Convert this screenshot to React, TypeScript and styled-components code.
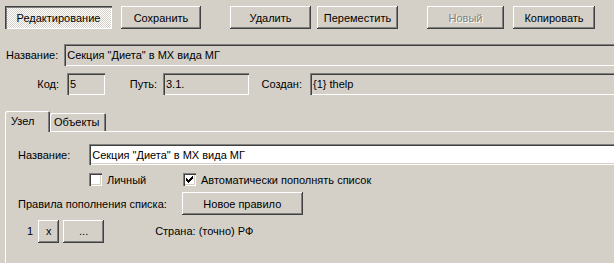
import React from 'react';
import styled, { createGlobalStyle, css } from 'styled-components';

const GlobalStyle = createGlobalStyle`
  html, body {
    margin: 0;
    padding: 0;
    background: #d4d0c8;
  }
  body {
    font-family: "Liberation Sans", Arial, sans-serif;
    font-size: 11px;
    color: #000;
  }
`;

const raised = css`
  box-shadow: inset -1px -1px #404040, inset 1px 1px #ffffff, inset -2px -2px #808080;
`;

const sunken = css`
  box-shadow: inset 1px 1px #808080, inset 2px 2px #404040, inset -1px -1px #ffffff, inset -2px -2px #d4d0c8;
`;

const Window = styled.div`
  width: 614px;
  height: 263px;
  overflow: hidden;
  background: #d4d0c8;
  display: flex;
  flex-direction: column;
`;

const Toolbar = styled.div`
  display: flex;
  padding: 6px 0 0 5px;
  height: 23px;
`;

const Button = styled.button<{ $w: number; $gap?: number; $pressed?: boolean }>`
  width: ${p => p.$w}px;
  height: 23px;
  margin-left: ${p => p.$gap ?? 0}px;
  border: none;
  padding: 0;
  font: inherit;
  color: #000;
  background: #d4d0c8;
  ${raised}
  ${p => p.$pressed && css`
    background-color: #ffffff;
    background-image: conic-gradient(#d4d0c8 25%, #ffffff 0 50%, #d4d0c8 0 75%, #ffffff 0);
    background-size: 2px 2px;
    box-shadow: inset 1px 1px #404040, inset 2px 2px #808080, inset -1px -1px #ffffff;
  `}
  &:disabled {
    color: #808080;
    text-shadow: 1px 1px #ffffff;
  }
`;

const FieldRow = styled.div<{ $top: number }>`
  display: flex;
  align-items: center;
  margin-top: ${p => p.$top}px;
  height: 22px;
`;

const Label = styled.span<{ $w: number }>`
  width: ${p => p.$w}px;
  flex: none;
  text-align: right;
`;

const Field = styled.div<{ $w?: number; $white?: boolean; $h?: number }>`
  box-sizing: border-box;
  height: ${p => p.$h ?? 22}px;
  ${p => (p.$w ? `width: ${p.$w}px; flex: none;` : 'flex: 1; margin-right: -10px;')}
  background: ${p => (p.$white ? '#ffffff' : '#d4d0c8')};
  ${sunken}
  display: flex;
  align-items: center;
  padding: 0 3px;
  white-space: nowrap;
`;

const TabStrip = styled.div`
  display: flex;
  align-items: flex-end;
  margin: 16px 0 0 5px;
  height: 20px;
  position: relative;
  z-index: 1;
`;

const Tab = styled.div<{ $w: number; $active?: boolean }>`
  box-sizing: border-box;
  width: ${p => p.$w}px;
  height: ${p => (p.$active ? 21 : 18)}px;
  margin-bottom: ${p => (p.$active ? -1 : 0)}px;
  background: #d4d0c8;
  border-radius: 2px 2px 0 0;
  box-shadow: inset 1px 1px #ffffff, inset -1px 0 #404040, inset -2px 0 #808080;
  display: flex;
  align-items: ${p => (p.$active ? 'flex-start' : 'center')};
  padding: ${p => (p.$active ? '4px 0 0 6px' : '0 0 0 4px')};
`;

const Panel = styled.div`
  flex: 1;
  margin-left: 5px;
  border-top: 1px solid #ffffff;
  border-left: 1px solid #ffffff;
  display: flex;
  flex-direction: column;
`;

const PanelRow = styled.div<{ $top: number; $h: number }>`
  display: flex;
  align-items: center;
  margin-top: ${p => p.$top}px;
  height: ${p => p.$h}px;
  white-space: nowrap;
`;

const Check = styled.span<{ $left: number }>`
  box-sizing: border-box;
  width: 13px;
  height: 13px;
  margin-left: ${p => p.$left}px;
  background: #ffffff;
  ${sunken}
  display: flex;
  align-items: center;
  justify-content: center;
  flex: none;
`;

const CheckText = styled.span<{ $w?: number }>`
  margin-left: 5px;
  ${p => p.$w && `width: ${p.$w}px;`}
`;

const Spacer = styled.span<{ $w: number }>`
  width: ${p => p.$w}px;
  flex: none;
`;

const Tick = () => (
  <svg width="7" height="7" viewBox="0 0 7 7">
    <path d="M0 2h1v1h1v1h1v-1h1v-1h1v-1h1v-1h1v3h-1v1h-1v1h-1v1h-1v1h-1v-1h-1v-1h-1z" fill="#000" />
  </svg>
);

export default function App() {
  return (
    <Window>
      <GlobalStyle />
      <Toolbar>
        <Button $w={107} $pressed>Редактирование</Button>
        <Button $w={80} $gap={9}>Сохранить</Button>
        <Button $w={81} $gap={29}>Удалить</Button>
        <Button $w={81} $gap={6}>Переместить</Button>
        <Button $w={77} $gap={29} disabled>Новый</Button>
        <Button $w={82} $gap={9}>Копировать</Button>
      </Toolbar>

      <FieldRow $top={15}>
        <Spacer $w={6} />
        <span>Название:</span>
        <Spacer $w={6} />
        <Field>Секция "Диета" в МХ вида МГ</Field>
      </FieldRow>

      <FieldRow $top={7}>
        <Label $w={59}>Код:</Label>
        <Spacer $w={8} />
        <Field $w={38}>5</Field>
        <Label $w={52}>Путь:</Label>
        <Spacer $w={6} />
        <Field $w={86}>3.1.</Field>
        <Label $w={53}>Создан:</Label>
        <Spacer $w={8} />
        <Field>{'{1} thelp'}</Field>
      </FieldRow>

      <TabStrip>
        <Tab $w={45} $active>Узел</Tab>
        <Tab $w={56}>Объекты</Tab>
      </TabStrip>
      <Panel>
        <PanelRow $top={12} $h={21}>
          <Spacer $w={12} />
          <span>Название:</span>
          <Spacer $w={19} />
          <Field $white $h={21}>Секция "Диета" в МХ вида МГ</Field>
        </PanelRow>
        <PanelRow $top={7} $h={15}>
          <Check $left={83} />
          <CheckText $w={39}>Личный</CheckText>
          <Check $left={37}><Tick /></Check>
          <CheckText>Автоматически пополнять список</CheckText>
        </PanelRow>
        <PanelRow $top={5} $h={23}>
          <Spacer $w={12} />
          <span>Правила пополнения списка:</span>
          <Spacer $w={15} />
          <Button $w={121}>Новое правило</Button>
        </PanelRow>
        <PanelRow $top={5} $h={22}>
          <Spacer $w={21} />
          <span>1</span>
          <Spacer $w={5} />
          <Button $w={21}>x</Button>
          <Button $w={41} $gap={4}>...</Button>
          <Spacer $w={51} />
          <span>Страна: (точно) РФ</span>
        </PanelRow>
      </Panel>
    </Window>
  );
}
